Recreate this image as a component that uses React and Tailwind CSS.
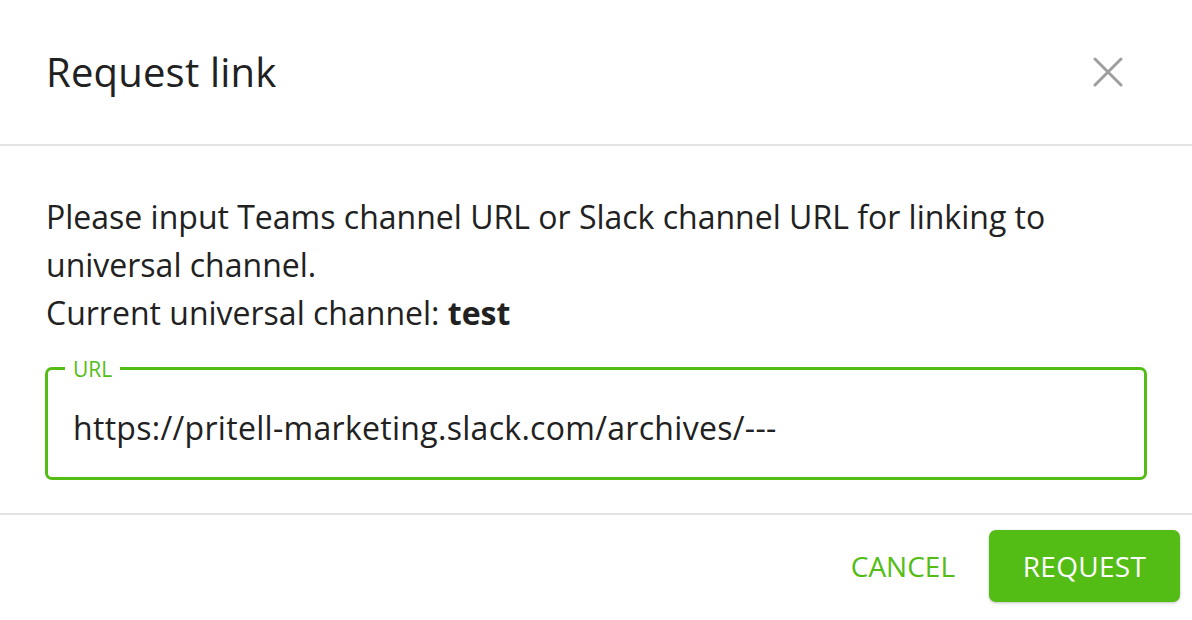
import React from 'react';

function CloseIcon() {
  return (
    <svg width="30" height="30" viewBox="0 0 30 30" fill="none">
      <path d="M2 2 L28 28 M28 2 L2 28" stroke="#9e9e9e" strokeWidth="3" strokeLinecap="round" />
    </svg>
  );
}

export default function App() {
  return (
    <div className="w-[1192px] h-[620px] bg-white text-[#212121] font-['Open_Sans',sans-serif] overflow-hidden flex flex-col">
      <div className="h-[146px] flex items-center justify-between pl-[46px] pr-[69px] border-b-2 border-[#e3e3e3]">
        <h1 className="text-[40px] font-normal tracking-[0.2px]">Request link</h1>
        <button className="flex items-center justify-center">
          <CloseIcon />
        </button>
      </div>

      <div className="px-[45px] pt-[47px]">
        <p className="text-[32px] leading-[48px] pl-px">
          Please input Teams channel URL or Slack channel URL for linking to
          <br />
          universal channel.
          <br />
          Current universal channel: <span className="font-bold">test</span>
        </p>

        <div className="relative mt-[30px] h-[113px] border-[3px] border-[#53bd15] rounded-[7px] flex items-center pl-[25px]">
          <span className="absolute left-[17px] -top-[15px] px-[8px] bg-white text-[21px] leading-[28px] text-[#53bd15]">
            URL
          </span>
          <span className="text-[32px] tracking-[0.3px] pt-[8px]">https://pritell-marketing.slack.com/archives/---</span>
        </div>
      </div>

      <div className="mt-[33px] border-t-2 border-[#e3e3e3] flex justify-end items-start gap-[2px] pt-[15px] pr-[12px]">
        <button className="h-[72px] px-[32px] text-[28px] text-[#53bd15]">CANCEL</button>
        <button className="h-[72px] w-[191px] rounded-[7px] bg-[#53bd15] text-white text-[28px] tracking-[0.3px] shadow-[0_1px_3px_rgba(0,0,0,0.25)]">
          REQUEST
        </button>
      </div>
    </div>
  );
}
